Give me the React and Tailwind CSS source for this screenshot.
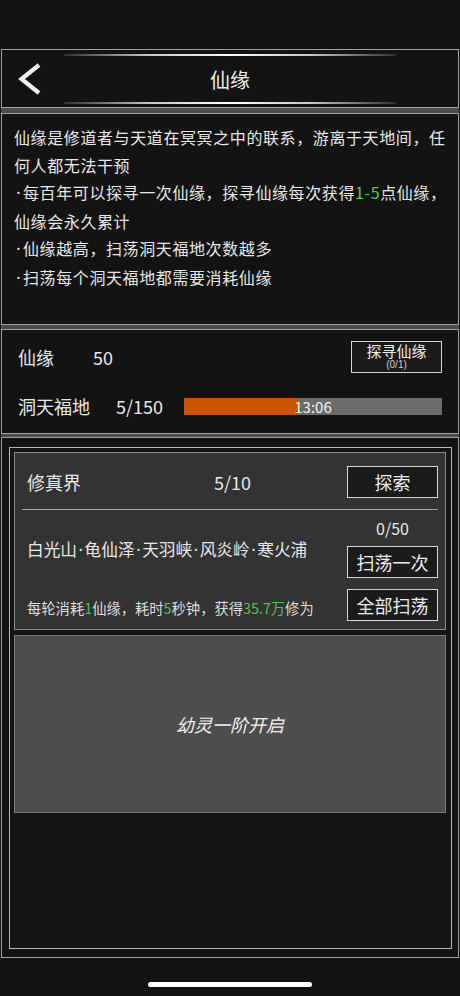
function Dot({ w = "w-[8px]" }) {
  return (
    <span className={`inline-block ${w} text-center font-['Noto_Sans',sans-serif] tracking-normal`}>·</span>
  );
}

export default function App() {
  const lineGrad =
    "h-[2px] w-full bg-[linear-gradient(90deg,rgba(255,255,255,0.12),rgba(255,255,255,0.75)_25%,#ffffff_50%,rgba(255,255,255,0.75)_75%,rgba(255,255,255,0.12))]";
  const btn =
    "w-[91px] h-[32px] border border-[#d6d6d6] bg-[#1b1b1b] flex items-center justify-center text-[18px] leading-[20px] text-[#eeeeee]";
  return (
    <div className="min-h-[996px] w-[460px] bg-[#121212] text-[#e8e8e8] font-['Noto_Sans_CJK_SC',sans-serif] pt-[49px] overflow-hidden">
      <div className="mx-px">
        {/* header */}
        <div className="h-[59px] border border-[#a0a0a0] bg-[#131313] grid grid-cols-[62px_1fr_62px]">
          <div className="flex items-center pl-[15px]">
            <svg width="26" height="36" viewBox="0 0 26 36">
              <polyline
                points="22,4 4.5,18 22,32"
                fill="none"
                stroke="#f2f2f2"
                strokeWidth="4.2"
                strokeLinejoin="miter"
              />
            </svg>
          </div>
          <div className="flex flex-col pt-[4px] pb-[3px]">
            <div className={lineGrad} />
            <div className="flex-1 flex items-center justify-center pt-[2px] text-[20px] leading-[24px] text-[#f0f0f0]">
              仙缘
            </div>
            <div className={lineGrad} />
          </div>
          <div />
        </div>
        <div className="h-[5px] bg-[#4c4c4c]" />

        {/* description */}
        <div className="h-[212px] border border-[#a0a0a0] bg-[#131313] pl-[12px] pt-[10px] text-[16px] tracking-[0.6px] leading-[27.6px] whitespace-nowrap">
          <div>仙缘是修道者与天道在冥冥之中的联系，游离于天地间，任</div>
          <div>何人都无法干预</div>
          <div>
            <Dot w="w-[9px]" />每百年可以探寻一次仙缘，探寻仙缘每次获得
            <span className="text-[#52cf52]">1-5</span>点仙缘，
          </div>
          <div>仙缘会永久累计</div>
          <div>
            <Dot w="w-[9px]" />仙缘越高，扫荡洞天福地次数越多
          </div>
          <div>
            <Dot w="w-[9px]" />扫荡每个洞天福地都需要消耗仙缘
          </div>
        </div>
        <div className="h-[4px] bg-[#4c4c4c]" />

        {/* stats */}
        <div className="h-[105px] border border-[#a0a0a0] bg-[#131313] pt-[11px] pl-[16px] pr-[16px]">
          <div className="h-[32px] flex items-center justify-between">
            <div className="flex items-center text-[18px] leading-[24px]">
              <span className="w-[75px]">仙缘</span>
              <span>50</span>
            </div>
            <div className="w-[91px] h-[32px] border border-[#d6d6d6] bg-[#1b1b1b] flex flex-col items-center justify-center">
              <span className="text-[15px] leading-[16px] text-[#eeeeee]">探寻仙缘</span>
              <span className="text-[10px] leading-[12px] text-[#cfcfcf] font-['Liberation_Sans',sans-serif]">(0/1)</span>
            </div>
          </div>
          <div className="h-[32px] mt-[17px] flex items-center text-[18px] leading-[24px]">
            <span className="w-[98px]">洞天福地</span>
            <span className="w-[68px]">5/150</span>
            <div className="relative w-[258px] h-[17px] bg-[#6b6b6b]">
              <div className="h-full bg-[#cc5300]" style={{ width: `${(113 / 258) * 100}%` }} />
              <div className="absolute inset-0 flex items-center justify-center text-[15px] leading-[17px] text-[#f4f4f4]">
                13:06
              </div>
            </div>
          </div>
        </div>
        <div className="h-[3px] bg-[#4c4c4c]" />

        {/* main */}
        <div className="h-[521px] border border-[#a0a0a0] bg-[#131313] pt-[9px] pl-[7px] pr-[6px] pb-[8px]">
          <div className="h-full border border-[#b8b8b8] bg-[#141414] pt-[4px] pl-[4px] pr-[5px] flex flex-col gap-[5px]">
            <div className="h-[178px] border border-[#8a8a8a] bg-[#333333] flex flex-col">
              <div className="h-[56px] pt-[2px] grid grid-cols-[1fr_auto_1fr] items-center pl-[12px] pr-[7px]">
                <span className="text-[18px] leading-[24px]">修真界</span>
                <span className="text-[18px] leading-[24px]">5/10</span>
                <div className="justify-self-end">
                  <div className={btn}>探索</div>
                </div>
              </div>
              <div className="h-px bg-[#a5a5a5] mx-[7px]" />
              <div className="flex-1 flex">
                <div className="flex-1 pl-[12px] pt-[27px] whitespace-nowrap">
                  <div className="text-[16.7px] leading-[24px] text-[#e8e8e8]">
                    白光山<Dot w="w-[7.5px]" />龟仙泽<Dot w="w-[7.5px]" />天羽峡<Dot w="w-[7.5px]" />风炎岭<Dot w="w-[7.5px]" />寒火浦
                  </div>
                  <div className="mt-[36px] text-[14.3px] leading-[20px] text-[#dddddd]">
                    每轮消耗<span className="text-[#4fc24f]">1</span>仙缘，耗时
                    <span className="text-[#4fc24f]">5</span>秒钟，获得
                    <span className="text-[#4fc24f]">35.7万</span>修为
                  </div>
                </div>
                <div className="w-[91px] mr-[7px] pt-[8px] flex flex-col">
                  <div className="text-center text-[16px] leading-[20px]">0/50</div>
                  <div className={`${btn} mt-[8px]`}>扫荡一次</div>
                  <div className={`${btn} mt-[11px]`}>全部扫荡</div>
                </div>
              </div>
            </div>
            <div className="h-[178px] border border-[#7a7a7a] bg-[#4d4d4d] flex items-center justify-center">
              <span className="italic text-[18px] leading-[24px] text-[#f0f0f0]">幼灵一阶开启</span>
            </div>
          </div>
        </div>
      </div>
      <div className="mt-[24px] mx-auto w-[164px] h-[5px] rounded-full bg-white" />
    </div>
  );
}
